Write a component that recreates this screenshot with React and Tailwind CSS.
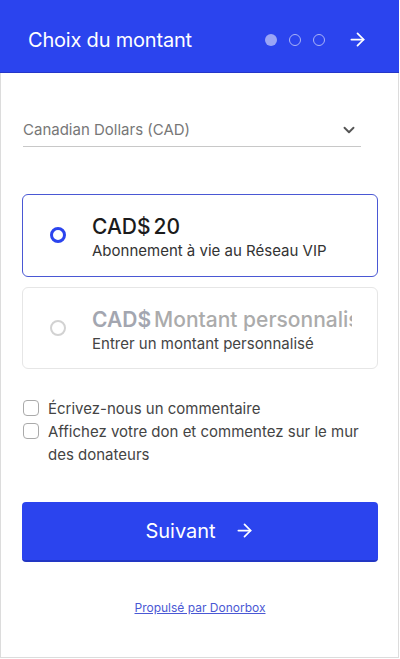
import { ArrowRight, ChevronDown } from "lucide-react";

export default function App() {
  return (
    <div className="w-[400px] h-[659px] bg-white" style={{ fontFamily: "Inter, 'Noto Sans', sans-serif" }}>
      <div className="w-[399px] h-[658px] flex flex-col">
        {/* Header */}
        <div className="h-[73px] bg-[#2b44ee] border-b border-[#2536c8] flex items-center pl-7 pr-[31px] pt-[7px] shrink-0">
          <h1 className="text-white text-[20px] flex-1 tracking-[-0.2px]">Choix du montant</h1>
          <div className="flex items-center gap-[12px] mr-[22px]">
            <span className="w-[12px] h-[12px] rounded-full bg-[#9aa5f6]" />
            <span className="w-[12px] h-[12px] rounded-full border border-[#aab3f7]" />
            <span className="w-[12px] h-[12px] rounded-full border border-[#aab3f7]" />
          </div>
          <ArrowRight className="w-[21px] h-[21px] text-white" strokeWidth={2} />
        </div>

        {/* Body */}
        <div className="flex-1 border-x border-b border-[#dcdcdc] pl-[21px] pr-[20px] flex flex-col">
          <div className="mt-[46px] ml-[1px] mr-[17px] flex items-center justify-between border-b border-[#c8c8c8] pb-[4px]">
            <span className="text-[15px] text-[#777]">Canadian Dollars (CAD)</span>
            <ChevronDown className="w-[18px] h-[18px] text-[#555] mr-[3px]" strokeWidth={2.5} />
          </div>

          <div className="mt-[47px] h-[83px] rounded-[6px] border border-[#4a58d4] flex items-center">
            <span className="ml-[27px] w-[16px] h-[16px] rounded-full border-[3px] border-[#2b44ee] shrink-0" />
            <div className="ml-[26px] pt-[6px] flex flex-col">
              <span className="text-[21px] font-medium text-[#1b1b1b] leading-[27px]">
                CAD$<span className="ml-[3px]">20</span>
              </span>
              <span className="text-[15px] text-[#333]">Abonnement à vie au Réseau VIP</span>
            </div>
          </div>

          <div className="mt-[10px] h-[82px] rounded-[6px] border border-[#e6e6e6] flex items-center">
            <span className="ml-[27px] w-[16px] h-[16px] rounded-full border-[2px] border-[#d2d2d2] shrink-0" />
            <div className="ml-[26px] pt-[6px] flex flex-col min-w-0 w-[260px]">
              <span className="text-[21px] font-semibold text-[#a3a6b0] leading-[27px] whitespace-nowrap overflow-hidden">
                CAD$<span className="ml-[3px] font-medium text-[#ababab]">Montant personnalisé</span>
              </span>
              <span className="text-[15px] text-[#444]">Entrer un montant personnalisé</span>
            </div>
          </div>

          <div className="mt-[28px] ml-[1px] flex flex-col text-[15px] text-[#444] leading-[23px]">
            <label className="flex items-start gap-[9px]">
              <span className="mt-[3px] w-[16px] h-[16px] rounded-[4px] border border-[#aaa] shrink-0" />
              <span>Écrivez-nous un commentaire</span>
            </label>
            <label className="flex items-start gap-[9px] mr-[12px]">
              <span className="mt-[3px] w-[16px] h-[16px] rounded-[4px] border border-[#aaa] shrink-0" />
              <span>Affichez votre don et commentez sur le mur des donateurs</span>
            </label>
          </div>

          <button className="mt-[36px] h-[60px] rounded-[4px] bg-[#2b44ee] border-b-2 border-[#2236c4] flex items-center justify-center gap-[18px] text-white text-[20px]">
            <span>Suivant</span>
            <ArrowRight className="w-[21px] h-[21px]" strokeWidth={2} />
          </button>

          <div className="mt-[32px] text-center">
            <a className="text-[12px] text-[#4a58d4] underline">Propulsé par Donorbox</a>
          </div>
        </div>
      </div>
    </div>
  );
}
